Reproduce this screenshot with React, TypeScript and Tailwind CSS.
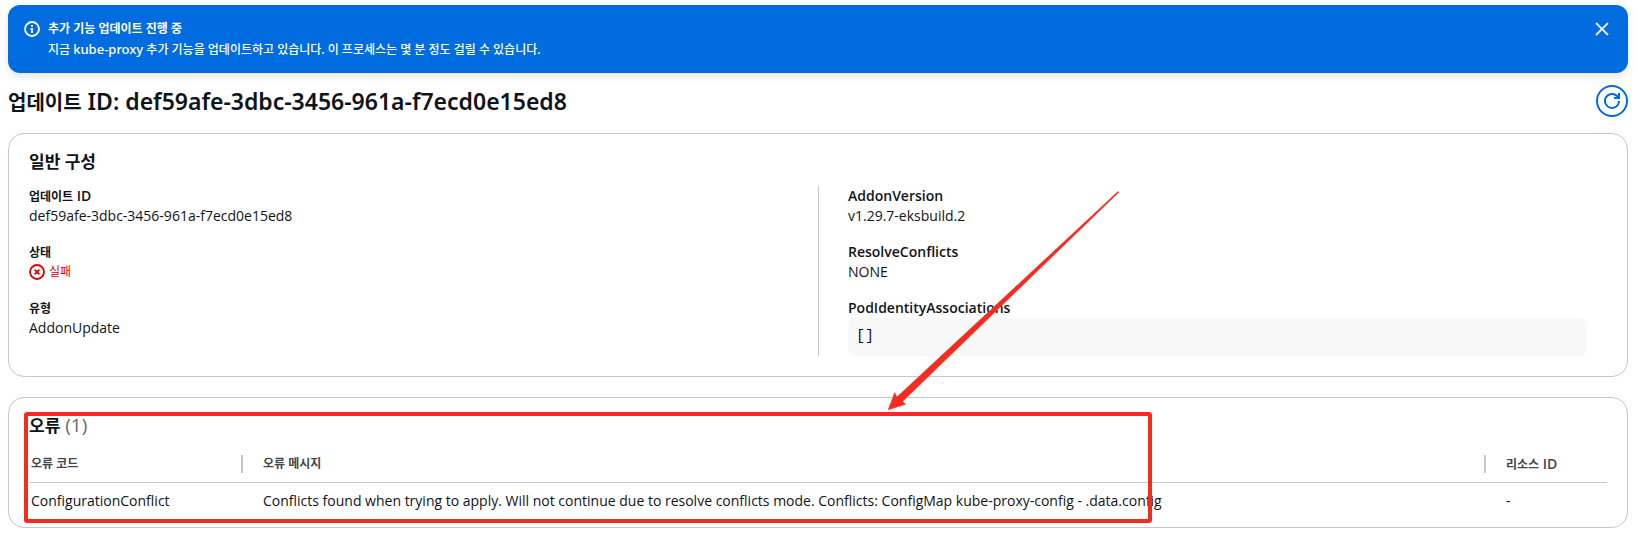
import type { ReactNode } from 'react';

interface Detail {
  label: ReactNode;
  value: ReactNode;
}

interface UpdateError {
  code: string;
  message: string;
  resourceId: string;
}

const UPDATE_ID = 'def59afe-3dbc-3456-961a-f7ecd0e15ed8';

const ERRORS: UpdateError[] = [
  {
    code: 'ConfigurationConflict',
    message:
      'Conflicts found when trying to apply. Will not continue due to resolve conflicts mode. Conflicts: ConfigMap kube-proxy-config - .data.config',
    resourceId: '-',
  },
];

// Hangul runs are set a step smaller than the Latin text around them
function Ko({ children }: { children: ReactNode }) {
  return <span className="text-[12px] font-bold">{children}</span>;
}

const GENERAL: Detail[] = [
  { label: <><Ko>업데이트</Ko> ID</>, value: UPDATE_ID },
  {
    label: <Ko>상태</Ko>,
    value: (
      <span className="flex items-center gap-1 text-[#db0000]">
        <StatusErrorIcon />
        <span className="text-[12px]">실패</span>
      </span>
    ),
  },
  { label: <Ko>유형</Ko>, value: 'AddonUpdate' },
];

const ADDON: Detail[] = [
  { label: 'AddonVersion', value: 'v1.29.7-eksbuild.2' },
  { label: 'ResolveConflicts', value: 'NONE' },
  {
    label: 'PodIdentityAssociations',
    value: (
      <pre className="rounded-lg bg-[#f8f8f8] px-2 py-[9px] font-['Liberation_Mono',monospace] text-[15px] leading-5">
        <code className="font-['Liberation_Mono',monospace]">[]</code>
      </pre>
    ),
  },
];

export default function App() {
  return (
    <div className="relative bg-white pt-[5px] pr-[9px] pb-2 pl-2 font-['Open_Sans','Noto_Sans_CJK_KR',sans-serif] text-[14px] leading-5 text-[#0f141a]">
      <UpdateBanner />

      {/* Page header */}
      <header className="mt-3 flex items-center justify-between">
        <h1 className="h-8 font-['Noto_Sans','Noto_Sans_CJK_KR',sans-serif] text-[23px] leading-8 font-semibold">
          <span className="text-[20px]">업데이트</span> ID: {UPDATE_ID}
        </h1>
        <button
          type="button"
          aria-label="새로 고침"
          className="flex h-8 w-8 items-center justify-center rounded-full border-2 border-[#006ce0] text-[#006ce0]"
        >
          <RefreshIcon />
        </button>
      </header>

      {/* General configuration */}
      <section className="mt-4 rounded-2xl border border-[#c6c6cd] px-5 pt-4 pb-5">
        <h2 className="mb-3 h-6 text-[17px] leading-6 font-bold">일반 구성</h2>
        <div className="grid grid-cols-2">
          <DetailList items={GENERAL} />
          <div className="border-l border-[#c6c6cd] pr-5 pl-[29px]">
            <DetailList items={ADDON} />
          </div>
        </div>
      </section>

      {/* Errors */}
      <section className="mt-5 rounded-2xl border border-[#c6c6cd] px-5 pt-4 pb-1">
        <h2 className="h-6 text-[19px] leading-[22px] font-bold">
          <span className="text-[17px]">오류</span>{' '}
          <span className="font-normal text-[#656871]">({ERRORS.length})</span>
        </h2>
        <ErrorTable errors={ERRORS} />
      </section>

      <Annotation />
    </div>
  );
}

function UpdateBanner() {
  return (
    <div
      role="status"
      className="flex h-[68px] items-start rounded-xl bg-[#006ce0] px-4 py-3.5 font-['Noto_Sans','Noto_Sans_CJK_KR',sans-serif] text-white shadow-[0_4px_8px_rgba(0,7,22,0.1)]"
    >
      <span className="mt-0.5 mr-2">
        <InfoIcon />
      </span>
      <div className="flex-1">
        <p className="h-5 text-[12px] leading-5 font-bold">추가 기능 업데이트 진행 중</p>
        <p className="h-5 text-[12px] leading-5 font-medium">
          지금 <span className="text-[13px]">kube-proxy</span> 추가 기능을 업데이트하고 있습니다. 이 프로세스는 몇 분 정도 걸릴 수 있습니다.
        </p>
      </div>
      <button type="button" aria-label="닫기" className="mt-0.5 mr-0.5 text-[#ebebf0]">
        <CloseIcon />
      </button>
    </div>
  );
}

function DetailList({ items }: { items: Detail[] }) {
  return (
    <dl className="space-y-4">
      {items.map((item, i) => (
        <div key={i}>
          <dt className="h-5 font-semibold">{item.label}</dt>
          <dd className="min-h-5">{item.value}</dd>
        </div>
      ))}
    </dl>
  );
}

function ErrorTable({ errors }: { errors: UpdateError[] }) {
  return (
    <table className="w-full table-fixed text-left">
      <thead>
        <tr className="border-b border-[#c6c6cd] text-[#424650]">
          <th scope="col" className="w-[214px] pt-4 pb-2 font-bold">
            <div className="flex h-5 items-center justify-between pl-0.5">
              <Ko>오류 코드</Ko>
              <span className="h-[18px] w-0.5 bg-[#c6c6cd]" />
            </div>
          </th>
          <th scope="col" className="pt-4 pb-2 font-bold">
            <div className="flex h-5 items-center justify-between pl-5">
              <Ko>오류 메시지</Ko>
              <span className="h-[18px] w-0.5 bg-[#c6c6cd]" />
            </div>
          </th>
          <th scope="col" className="w-[121px] pt-4 pb-2 pl-5 font-semibold">
            <div className="h-5"><Ko>리소스</Ko> ID</div>
          </th>
        </tr>
      </thead>
      <tbody>
        {errors.map((error) => (
          <tr key={error.code}>
            <td className="pt-2 pb-3 pl-0.5">{error.code}</td>
            <td className="truncate pt-2 pb-3 pl-5">{error.message}</td>
            <td className="pt-2 pb-3 pl-5">{error.resourceId}</td>
          </tr>
        ))}
      </tbody>
    </table>
  );
}

// Red box and arrow drawn over the error section
function Annotation() {
  return (
    <svg
      width="1160"
      height="530"
      viewBox="0 0 1160 530"
      className="pointer-events-none absolute top-0 left-0"
      aria-hidden="true"
    >
      <rect x="26" y="414" width="1124" height="107" rx="1" fill="none" stroke="#f22c1f" strokeWidth="4" />
      <path
        d="M888.3 409.7 L894.7 392.7 L897 397 L1118 191.6 L1118.8 192.2 L902.5 401.5 L905.6 404.3 Z"
        fill="#f22c1f"
        stroke="#f22c1f"
        strokeWidth="0.6"
      />
    </svg>
  );
}

function InfoIcon() {
  return (
    <svg width="16" height="16" viewBox="0 0 16 16" fill="none" stroke="currentColor" strokeWidth="1.8">
      <circle cx="8" cy="8" r="7" />
      <path d="M8 12V8H6.6M8 4v1.8" />
    </svg>
  );
}

function CloseIcon() {
  return (
    <svg width="16" height="16" viewBox="0 0 16 16" fill="none" stroke="currentColor" strokeWidth="1.8">
      <path d="m2 2 12 12M14 2 2 14" />
    </svg>
  );
}

function RefreshIcon() {
  return (
    <svg width="16" height="16" viewBox="0 0 16 16" fill="none" stroke="currentColor" strokeWidth="2">
      <path d="M15 8a7 7 0 1 1-2-5l2 2" />
      <path d="M10 5h5V0" />
    </svg>
  );
}

function StatusErrorIcon() {
  return (
    <svg width="16" height="16" viewBox="0 0 16 16" fill="none" stroke="currentColor" strokeWidth="1.8">
      <circle cx="8" cy="8" r="7" />
      <path d="m5.7 5.7 4.6 4.6M10.3 5.7l-4.6 4.6" />
    </svg>
  );
}
